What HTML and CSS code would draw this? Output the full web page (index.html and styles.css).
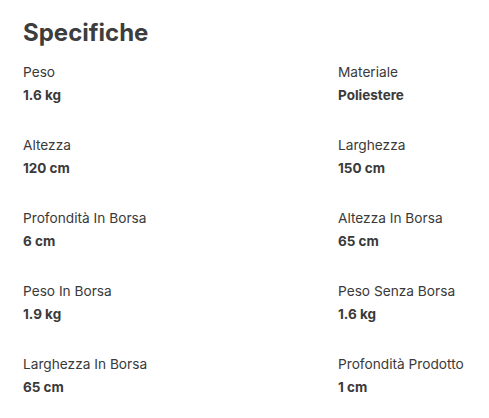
FILE: index.html
```html
<!DOCTYPE html>
<html lang="it">
<head>
<meta charset="utf-8">
<link rel="stylesheet" href="styles.css">
</head>
<body>
<section class="specs">
  <h2 class="title">Specifiche</h2>
  <dl class="grid">
    <div class="item"><dt>Peso</dt><dd>1.6 kg</dd></div>
    <div class="item"><dt>Materiale</dt><dd>Poliestere</dd></div>
    <div class="item"><dt>Altezza</dt><dd>120 cm</dd></div>
    <div class="item"><dt>Larghezza</dt><dd>150 cm</dd></div>
    <div class="item"><dt>Profondità In Borsa</dt><dd>6 cm</dd></div>
    <div class="item"><dt>Altezza In Borsa</dt><dd>65 cm</dd></div>
    <div class="item"><dt>Peso In Borsa</dt><dd>1.9 kg</dd></div>
    <div class="item"><dt>Peso Senza Borsa</dt><dd>1.6 kg</dd></div>
    <div class="item"><dt>Larghezza In Borsa</dt><dd>65 cm</dd></div>
    <div class="item"><dt>Profondità Prodotto</dt><dd>1 cm</dd></div>
  </dl>
</section>
</body>
</html>
```
FILE: styles.css
```css
html, body {
  margin: 0;
  padding: 0;
  background: #fff;
}
body {
  font-family: Inter, "Noto Sans", sans-serif;
  color: #3a3a3a;
}
.specs {
  padding: 17px 10px 0 23px;
}
.title {
  margin: 0 0 13px 0;
  font-size: 24px;
  line-height: 32px;
  font-weight: 700;
  color: #3d3d3d;
}
.grid {
  margin: 0;
  display: grid;
  grid-template-columns: 315px 1fr;
  row-gap: 30px;
}
.item {
  white-space: nowrap;
}
.item dt {
  font-size: 13.7px;
  line-height: 20px;
  font-weight: 400;
  color: #3a3a3a;
}
.item dd {
  margin: 3px 0 0 0;
  font-size: 13.5px;
  line-height: 20px;
  font-weight: 700;
  color: #3a3a3a;
}
```
